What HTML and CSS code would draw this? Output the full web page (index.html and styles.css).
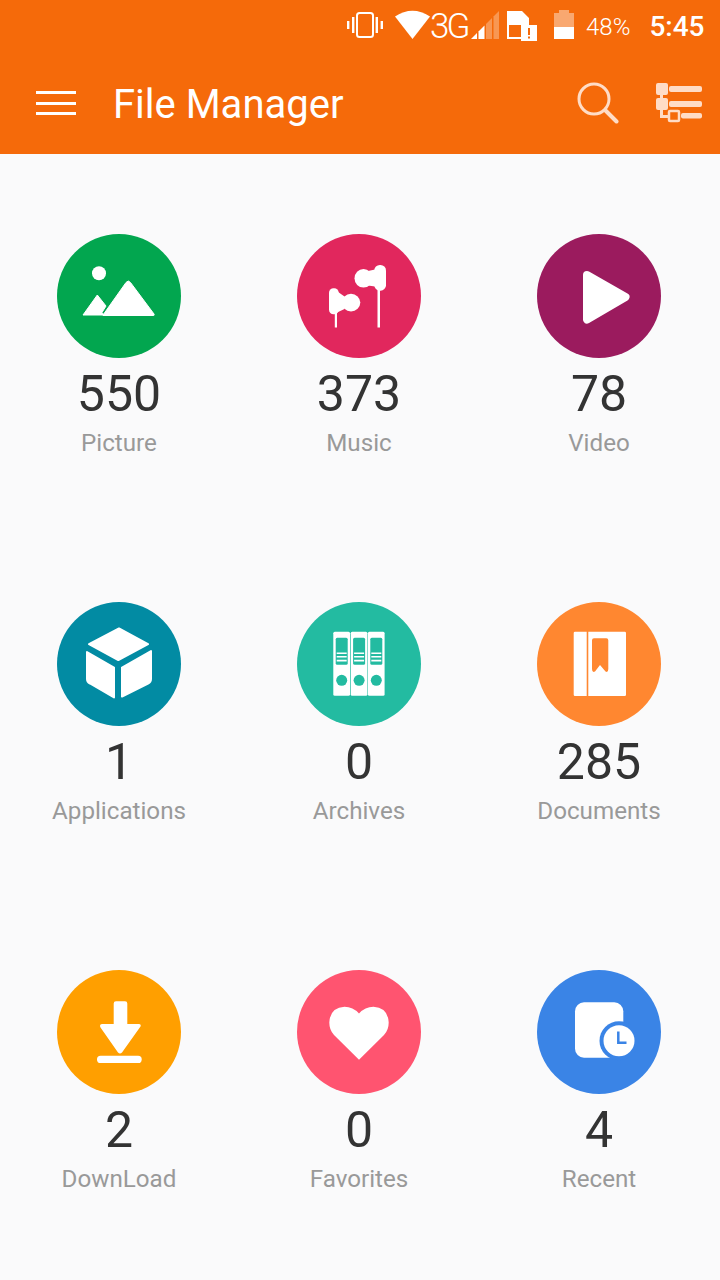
FILE: index.html
```html
<!DOCTYPE html>
<html lang="en">
<head>
<meta charset="utf-8">
<title>File Manager</title>
<link rel="stylesheet" href="styles.css">
</head>
<body>
<header class="appbar">
  <div class="status">
    <svg class="st st-vib" viewBox="0 0 36 26"><rect x="10" y="1" width="16" height="24" rx="2.5" fill="none" stroke="#fff" stroke-width="2"/><path d="M5 5h2.4v16H5zM0 9h2.4v8H0zM28.6 5H31v16h-2.4zM33.6 9H36v8h-2.4z" fill="#fff"/></svg>
    <svg class="st st-wifi" viewBox="0 0 35 29"><path d="M0 6.500Q17.500-5 35 6.500L17.500 29z" fill="#fff"/></svg>
    <span class="st-3g">3G</span>
    <svg class="st st-sig" viewBox="0 0 28 29"><path d="M0 29l6-6v6z" fill="#fff"/><path d="M7.500 21.500l6-6V29h-6z" fill="#fff"/><path d="M15 14l6-6v21h-6z" fill="#fff" opacity=".3"/><path d="M22.500 6.500L28 1v28h-5.500z" fill="#fff" opacity=".3"/></svg>
    <svg class="st st-sim" viewBox="0 0 30 30"><path d="M0 0H15L22 7V14H2V26H14V28H0z" fill="#fff"/><path d="M14 14h16v16H14z" fill="#fff"/><path d="M21 17h2v7h-2zM21 25.500h2v2h-2z" fill="#f56a0a"/></svg>
    <svg class="st st-bat" viewBox="0 0 20 29"><path d="M0 3h5V0h10v3h5v17H0z" fill="#fff" opacity=".42"/><path d="M0 17h20v12H0z" fill="#fff"/></svg>
    <span class="st-pct">48%</span>
    <span class="st-time">5:45</span>
  </div>
  <div class="toolbar">
    <div class="burger"><i></i><i></i><i></i></div>
    <h1 class="title">File Manager</h1>
    <svg class="tb-search" viewBox="0 0 42 42"><circle cx="17" cy="17" r="15" fill="none" stroke="#ffdcc6" stroke-width="3"/><path d="M28.500 28.500L39.500 39.500" stroke="#ffdcc6" stroke-width="4" stroke-linecap="round"/></svg>
    <svg class="tb-tree" viewBox="0 0 46 40"><g fill="#ffdcc6"><rect x="0" y="0" width="12" height="12" rx="2"/><rect x="0" y="15" width="12" height="12" rx="2"/><path d="M4 11h3v24H4zM4 32h10v3H4z"/><rect x="13" y="3" width="33" height="6" rx="2"/><rect x="13" y="18" width="33" height="6" rx="2"/><rect x="25" y="30" width="21" height="5.500" rx="2"/></g><rect x="13" y="28" width="10" height="10" rx="1" fill="none" stroke="#ffdcc6" stroke-width="2.500"/></svg>
  </div>
</header>
<main class="grid">
  <a class="tile">
    <svg class="disc" viewBox="0 0 124 124"><circle class="c-picture" cx="62" cy="62" r="62"/><g fill="#fff"><circle cx="42" cy="39.300" r="7"/><path d="M26 81L40.300 61 49 72 45 78.500 47 81zM46 81L69 48.500Q71.300 45.500 73.500 48.500L97 80Q97.800 81.500 96 81.500H46z" stroke="#fff" stroke-width="1" stroke-linejoin="round"/></g></svg>
    <span class="num">550</span><span class="lab">Picture</span>
  </a>
  <a class="tile">
    <svg class="disc" viewBox="0 0 124 124"><circle class="c-music" cx="62" cy="62" r="62"/><g fill="#fff"><rect x="77.300" y="31" width="11.700" height="25.700" rx="5.500"/><ellipse cx="66.500" cy="44.300" rx="9" ry="9.300"/><path d="M71 37L78 35.500V52.500L71 51.500z"/><rect x="80.500" y="52" width="2.500" height="41.500"/><rect x="32" y="54.300" width="9.700" height="26" rx="4.500"/><ellipse cx="54" cy="68.600" rx="9.300" ry="8.800"/><path d="M39 56.500L47.500 62.500V75L39 79z"/><rect x="37.800" y="78" width="2.200" height="15.500"/></g></svg>
    <span class="num">373</span><span class="lab">Music</span>
  </a>
  <a class="tile">
    <svg class="disc" viewBox="0 0 124 124"><circle class="c-video" cx="62" cy="62" r="62"/><path d="M50 41L88.500 63 50 85.500z" fill="#fff" stroke="#fff" stroke-width="8" stroke-linejoin="round"/></svg>
    <span class="num">78</span><span class="lab">Video</span>
  </a>
  <a class="tile">
    <svg class="disc" viewBox="0 0 124 124"><circle class="c-apps" cx="62" cy="62" r="62"/><g fill="#fff" stroke="#fff" stroke-width="2" stroke-linejoin="round"><path d="M62 26.500L91 42.200 61.300 58 32 42.200z"/><path d="M30 50L57 65.500V95.500L33 81.500Q30 80 30 77z"/><path d="M94 49V77Q94 80 91 81.500L65 94.500V65.500z"/></g></svg>
    <span class="num">1</span><span class="lab">Applications</span>
  </a>
  <a class="tile">
    <svg class="disc" viewBox="0 0 124 124"><circle class="c-arch" cx="62" cy="62" r="62"/><g id="b"><rect x="36.300" y="29.700" width="16.700" height="64" rx="1.500" fill="#fff"/><rect x="38.700" y="35.700" width="12" height="27" rx="1.500" fill="#23bba1"/><path d="M39.700 50.500h10v1.600h-10zM39.700 54h10v1.600h-10zM39.700 57.800h10v1.600h-10z" fill="#fff"/><circle cx="44.700" cy="78.300" r="5.500" fill="#23bba1"/></g><use href="#b" x="17.400"/><use href="#b" x="34.600"/></svg>
    <span class="num">0</span><span class="lab">Archives</span>
  </a>
  <a class="tile">
    <svg class="disc" viewBox="0 0 124 124"><circle class="c-docs" cx="62" cy="62" r="62"/><path d="M38 29.700H49.700V94H38Q36.700 94 36.700 92.700V31Q36.700 29.700 38 29.700zM51.300 29.700H87.700Q89 29.700 89 31V92.700Q89 94 87.700 94H51.300z" fill="#fff"/><path d="M57 36.300H69.300Q71.300 36.300 71.300 38.300V67Q71.300 71 68.500 69.500L63 63 58 69.500Q55 71 55 67V38.300Q55 36.300 57 36.300z" fill="#ff8730"/></svg>
    <span class="num">285</span><span class="lab">Documents</span>
  </a>
  <a class="tile">
    <svg class="disc" viewBox="0 0 124 124"><circle class="c-down" cx="62" cy="62" r="62"/><g fill="#fff"><path d="M59 31.300H68Q70.300 31.300 70.300 33.500V54H81.500Q84.500 54 83.500 56.500L65 82.500Q63 84.500 61 82.500L43.500 57.500Q42 54.500 45 54H56.700V33.500Q56.700 31.300 59 31.300z"/><rect x="40" y="85.700" width="44.700" height="7.300" rx="3.600"/></g></svg>
    <span class="num">2</span><span class="lab">DownLoad</span>
  </a>
  <a class="tile">
    <svg class="disc" viewBox="0 0 124 124"><circle class="c-fav" cx="62" cy="62" r="62"/><path d="M62 89.700L37 65Q32.300 60 32.300 52.500Q33 37.500 47.500 36.700Q56 36.700 62 43.500Q68 36.700 76.500 36.700Q91 37.500 91.700 52.500Q91.700 60 87 65z" fill="#fff"/></svg>
    <span class="num">0</span><span class="lab">Favorites</span>
  </a>
  <a class="tile">
    <svg class="disc" viewBox="0 0 124 124"><circle class="c-recent" cx="62" cy="62" r="62"/><rect x="38" y="32.300" width="48.300" height="55.400" rx="9" fill="#fff"/><circle cx="82" cy="70.700" r="19.500" fill="#3a84e6"/><circle cx="82" cy="70.700" r="15.500" fill="#fff"/><path d="M81.300 61.500V72.700H89.500" fill="none" stroke="#3a84e6" stroke-width="2.500"/></svg>
    <span class="num">4</span><span class="lab">Recent</span>
  </a>
</main>
</body>
</html>
```
FILE: styles.css
```css
* { box-sizing: border-box; }
html, body { margin: 0; padding: 0; }
body { width: 720px; height: 1280px; overflow: hidden; background: #fafafb; font-family: Roboto, "Liberation Sans", sans-serif; }
.appbar { height: 154px; background: #f56a0a; color: #fff; }
.status { height: 50px; display: flex; align-items: flex-start; padding-left: 347px; }
.st { display: block; flex: none; }
.st-vib { width: 36px; height: 26px; margin-top: 12px; }
.st-wifi { width: 35px; height: 29px; margin-top: 10px; margin-left: 12px; }
.st-3g { width: 41px; font-size: 35px; font-weight: 300; letter-spacing: -3px; line-height: 54px; }
.st-sig { width: 28px; height: 29px; margin-top: 10px; }
.st-sim { width: 30px; height: 30px; margin-top: 11px; margin-left: 8px; }
.st-bat { width: 20px; height: 29px; margin-top: 10px; margin-left: 17px; }
.st-pct { margin-left: 12px; font-size: 24px; font-weight: 300; line-height: 54px; }
.st-time { margin-left: 19px; font-size: 28px; font-weight: 500; line-height: 54px; }
.toolbar { height: 104px; display: flex; align-items: flex-start; padding: 0 18px 0 36px; }
.burger { width: 40px; height: 24px; margin-top: 41px; display: flex; flex-direction: column; justify-content: space-between; }
.burger i { display: block; height: 3px; background: #fff; }
.title { margin: 0 auto 0 37px; font-size: 40px; font-weight: 400; line-height: 110px; }
.tb-search { width: 42px; height: 42px; margin-top: 32px; flex: none; }
.tb-tree { width: 46px; height: 40px; margin-top: 33px; margin-left: 37px; flex: none; }
.grid { display: grid; grid-template-columns: repeat(3, 240px); grid-auto-rows: 368px; padding-top: 80px; margin-left: -1px; }
.tile { display: flex; flex-direction: column; align-items: center; }
.disc { display: block; width: 124px; height: 124px; }
.num { margin-top: 6px; font-size: 50px; line-height: 60px; color: #333; }
.lab { margin-top: 4px; font-size: 24.2px; line-height: 30px; color: #999; }
.c-picture { fill: #02a64f; }
.c-music { fill: #e1275d; }
.c-video { fill: #9b1b5e; }
.c-apps { fill: #028ba3; }
.c-arch { fill: #23bba1; }
.c-docs { fill: #ff8730; }
.c-down { fill: #ff9f00; }
.c-fav { fill: #ff5470; }
.c-recent { fill: #3a84e6; }
```
